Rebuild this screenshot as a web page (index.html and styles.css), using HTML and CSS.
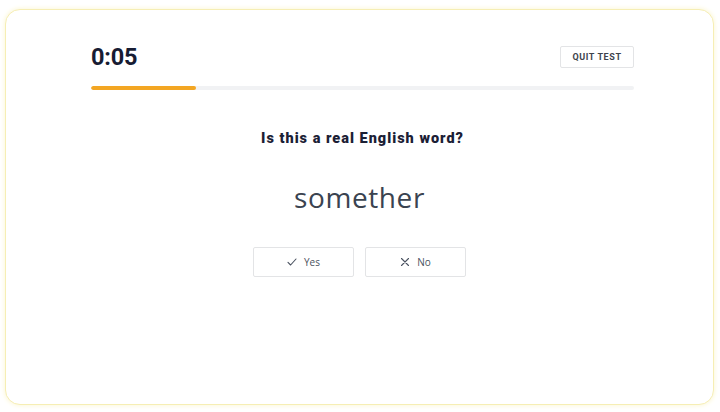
FILE: index.html
```html
<!DOCTYPE html>
<html>
<head>
<meta charset="utf-8">
<link rel="stylesheet" href="styles.css">
</head>
<body>
<div class="card">
  <div class="inner">
    <div class="top">
      <div class="timer">0:05</div>
      <button class="quit">QUIT TEST</button>
    </div>
    <div class="track"><div class="fill" style="width:19.3%"></div></div>
    <div class="question">Is this a real English word?</div>
    <div class="word">somether</div>
    <div class="answers">
      <button class="ans">
        <svg width="10" height="10" viewBox="0 0 10 10"><path d="M1 5.4 L3.6 8 L9 2" fill="none" stroke="#4a5260" stroke-width="1.1" stroke-linecap="round" stroke-linejoin="round"/></svg>
        <span>Yes</span>
      </button>
      <button class="ans">
        <svg width="10" height="10" viewBox="0 0 10 10"><path d="M1.5 1.5 L8.5 8.5 M8.5 1.5 L1.5 8.5" fill="none" stroke="#4a5260" stroke-width="1.1" stroke-linecap="round"/></svg>
        <span>No</span>
      </button>
    </div>
  </div>
</div>
</body>
</html>
```
FILE: styles.css
```css
html, body {
  margin: 0;
  padding: 0;
  background: #ffffff;
}
body {
  width: 720px;
  height: 412px;
  box-sizing: border-box;
  padding: 9px 6px 7px 5px;
  font-family: "Roboto", "Liberation Sans", sans-serif;
}
.card {
  height: 100%;
  box-sizing: border-box;
  border: 1.5px solid #f6eeb4;
  border-radius: 15px;
  box-shadow: 0 0 4px 1px #fcf8dc;
  background: #fff;
  padding: 34px 79px 0 85px;
}
.top {
  display: flex;
  justify-content: space-between;
  align-items: center;
  height: 26px;
}
.timer {
  font-family: "Roboto", "Liberation Sans", sans-serif;
  font-weight: 700;
  font-size: 23.5px;
  color: #171c33;
  letter-spacing: -0.2px;
  line-height: 26px;
}
.quit {
  font-family: "Roboto", "Liberation Sans", sans-serif;
  font-weight: 700;
  font-size: 9px;
  letter-spacing: 0.6px;
  color: #3e434c;
  background: #fff;
  border: 1px solid #e3e4e6;
  border-radius: 2px;
  width: 74px;
  height: 22px;
  padding: 0;
}
.track {
  margin-top: 16px;
  height: 4px;
  border-radius: 2px;
  background: #f1f2f4;
  overflow: hidden;
}
.fill {
  height: 100%;
  background: #f3a623;
  border-radius: 2px;
}
.question {
  margin-top: 40px;
  text-align: center;
  font-family: "Roboto", "Liberation Sans", sans-serif;
  font-weight: 900;
  font-size: 14.5px;
  letter-spacing: 1px;
  color: #1b2035;
}
.word {
  margin-top: 32px;
  text-align: center;
  font-family: "Open Sans", "Liberation Sans", sans-serif;
  font-size: 28px;
  color: #3a4350;
  letter-spacing: 0.6px;
  line-height: 36px;
  padding-right: 6px;
}
.answers {
  margin-top: 32px;
  display: flex;
  justify-content: center;
  gap: 11px;
  padding-right: 6px;
}
.ans {
  width: 101px;
  height: 30px;
  background: #fff;
  border: 1px solid #e3e4e6;
  border-radius: 2px;
  display: flex;
  align-items: center;
  justify-content: center;
  gap: 7px;
  font-family: "Open Sans", "Liberation Sans", sans-serif;
  font-size: 10px;
  color: #4a5260;
  padding: 0;
}
```
